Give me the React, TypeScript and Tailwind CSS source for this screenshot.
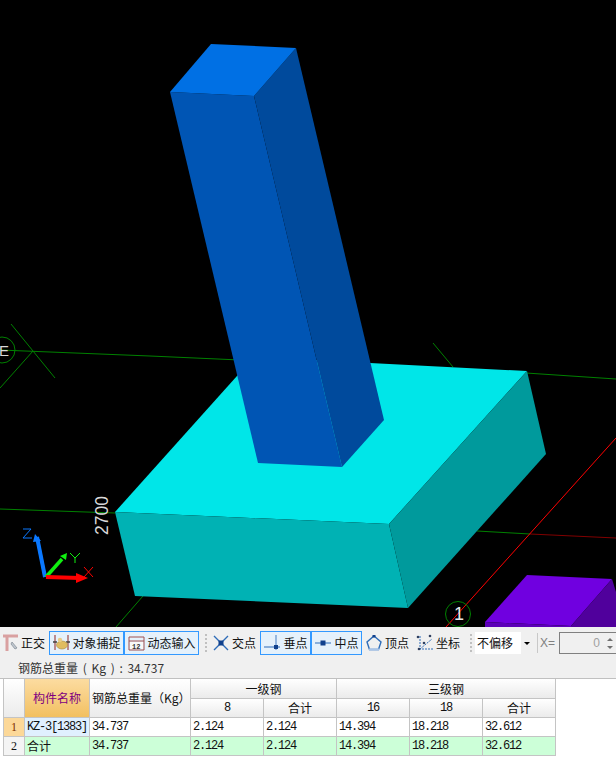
const cjk = "font-['Noto_Sans_CJK_SC','Liberation_Sans',sans-serif]";
const mono = "font-['Liberation_Mono','Noto_Sans_CJK_SC',monospace] text-[12px] tracking-[-1.2px]";

function Scene() {
  return (
    <svg width="616" height="627" viewBox="0 0 616 627" className="block">
      <g fill="none" strokeWidth="1">
        <path d="M0 350 L150 356 L240 360" stroke="#008000" />
        <path d="M526 373 L616 379" stroke="#008000" />
        <path d="M11 324 L55 378 M0 388 L33 351" stroke="#008000" />
        <path d="M0 509 L115 513" stroke="#008000" />
        <path d="M143 596 L116 627" stroke="#008000" />
        <path d="M433 343 L453 367" stroke="#008000" />
        <path d="M477 531 L530 534" stroke="#008000" />
        <path d="M530 534 L616 538" stroke="#800000" />
        <path d="M616 438 L446 627" stroke="#ff0000" />
        <circle cx="458" cy="614" r="12.5" stroke="#008000" />
        <circle cx="2" cy="350" r="13" stroke="#008000" />
      </g>
      <polygon points="115,512 254,357 527,371 389,524" fill="#00e6e8" />
      <polygon points="115,512 389,524 408,608 135,596" fill="#00b2b4" />
      <polygon points="389,524 527,371 546,454 408,608" fill="#009a9c" />
      <polygon points="170,92 254,96 342,467 258,463" fill="#0055b4" />
      <polygon points="254,96 296,48 384,420 342,467" fill="#004a9c" />
      <polygon points="170,92 211,44 296,48 254,96" fill="#0070e4" />
      <polygon points="527,575 612,579 571,626 485,622" fill="#7000e0" />
      <polygon points="612,579 616,592 616,627 571,627 571,626" fill="#50009c" />
      <polygon points="485,622 571,626 571,627 485,627" fill="#5c00b8" />
      <path d="M45 577 L37 537" stroke="#0a78ff" strokeWidth="4" fill="none" />
      <polygon points="33,542 41,541 35,534" fill="#0a78ff" />
      <path d="M46 577 L62 559" stroke="#10f010" strokeWidth="3.5" fill="none" />
      <polygon points="60,556 67,553 66,560" fill="#10f010" />
      <path d="M46 577 L80 578" stroke="#ff0000" strokeWidth="4" fill="none" />
      <polygon points="76,573 88,578 76,583" fill="#ff0000" />
      <path d="M23 529 H31 L23 538 H32" stroke="#0a78ff" fill="none" />
      <path d="M70 553 L75 558 L80 553 M75 558 V563" stroke="#10f010" fill="none" />
      <path d="M84 567 L93 577 M93 567 L84 577" stroke="#ff0000" fill="none" />
      <text x="-1" y="356" fontFamily="Liberation Sans, sans-serif" fontSize="15" fill="#d8d8d8">E</text>
      <text x="459" y="620" fontFamily="Liberation Sans, sans-serif" fontSize="18" textAnchor="middle" fill="#e8e8e8">1</text>
      <text transform="translate(108 535) rotate(-90)" fontFamily="Liberation Sans, sans-serif" fontSize="17.5" fill="#d8d8d8">2700</text>
    </svg>
  );
}

function Tool({ w, active, icon, label, gap = 'gap-[2px]' }: { w: string; active?: boolean; icon: React.ReactNode; label: string; gap?: string }) {
  return (
    <div className={`${w} h-[24px] flex items-center justify-center ${gap} shrink-0 border ${active ? 'border-[#3399ff] bg-[#e5f1fb]' : 'border-transparent'}`}>
      {icon}
      <span className="text-[12px] leading-none text-[#111] whitespace-nowrap">{label}</span>
    </div>
  );
}

function Handle({ className }: { className: string }) {
  return (
    <div className={`flex flex-col gap-[2px] shrink-0 ${className}`}>
      {[0, 1, 2, 3, 4].map((i) => (
        <div key={i} className="w-[2px] h-[2px] bg-[#c0c0c0]" />
      ))}
    </div>
  );
}

const Ic = ({ children, w = 18 }: { children: React.ReactNode; w?: number }) => (
  <svg width={w} height="18" viewBox={`0 0 ${w} 18`} className="shrink-0">{children}</svg>
);

function Toolbar() {
  return (
    <div className={`h-[30px] flex items-center bg-[#f0f0f0] pt-[2px] shrink-0 ${cjk}`}>
      <div className="w-[49px] h-[24px] flex items-center shrink-0 pl-[2px] gap-[1px]">
        <Ic>
          <path d="M1 2 H16 M5 2 V17" stroke="#d9a0a0" strokeWidth="3" fill="none" />
          <path d="M10 8 L15 14 L13 15 L9 10 Z" fill="#c0c8d0" stroke="#808890" strokeWidth="0.7" />
        </Ic>
        <span className="text-[12px] leading-none text-[#111]">正交</span>
      </div>
      <Tool
        w="w-[75px]"
        active
        gap="gap-0"
        label="对象捕捉"
        icon={
          <Ic w={20}>
            <path d="M3 1 V16 M16 1 V16" stroke="#a04848" strokeWidth="1.2" />
            <path d="M1 8 H5 M14 8 H18" stroke="#404040" strokeWidth="1.5" />
            <ellipse cx="10" cy="11" rx="5.5" ry="4" fill="#e0bc60" stroke="#a88840" strokeWidth="0.6" />
            <circle cx="8" cy="6" r="2.2" fill="#e8cc88" />
          </Ic>
        }
      />
      <Tool
        w="w-[75px]"
        active
        gap="gap-0"
        label="动态输入"
        icon={
          <Ic w={20}>
            <path d="M2 3 H17 M2 7 H17 M2 3 V16 H17 V3" stroke="#a05050" strokeWidth="1" fill="none" />
            <rect x="3" y="8" width="13" height="7" fill="#f8f8f8" />
            <text x="5" y="15" fontSize="7" fontFamily="Liberation Mono, monospace" fontWeight="700" fill="#333">12</text>
          </Ic>
        }
      />
      <Handle className="ml-[6px] mr-[3px]" />
      <Tool
        w="w-[48px]"
        label="交点"
        icon={
          <Ic>
            <path d="M2 2 L16 16 M16 2 L2 16" stroke="#2f6db8" strokeWidth="1.4" />
            <rect x="6.5" y="6.5" width="5" height="5" fill="#10408c" />
          </Ic>
        }
      />
      <div className="w-[2px] shrink-0" />
      <Tool
        w="w-[51px]"
        active
        label="垂点"
        icon={
          <Ic>
            <path d="M1 13 H17 M13 1 V16" stroke="#6a98d0" strokeWidth="1.3" />
            <rect x="11" y="11" width="4" height="4" fill="#10408c" />
          </Ic>
        }
      />
      <Tool
        w="w-[51px]"
        active
        label="中点"
        icon={
          <Ic>
            <path d="M1 9 H17" stroke="#6a98d0" strokeWidth="1.5" />
            <rect x="6.5" y="6.5" width="5" height="5" fill="#10408c" />
          </Ic>
        }
      />
      <Tool
        w="w-[50px]"
        label="顶点"
        icon={
          <Ic>
            <polygon points="9,2 16,8 13.5,15.5 4.5,15.5 2,8" fill="none" stroke="#2f6db8" strokeWidth="1.4" />
            <rect x="7.5" y="1" width="3" height="2.5" fill="#10408c" />
            <rect x="4" y="14.5" width="10" height="2" fill="#a8c4e8" />
          </Ic>
        }
      />
      <div className="w-[1px] shrink-0" />
      <Tool
        w="w-[50px]"
        label="坐标"
        icon={
          <Ic>
            <path d="M4 2 V15 H17 M4 15 L16 5" stroke="#2f6db8" strokeWidth="1" strokeDasharray="2 1" fill="none" />
            <circle cx="2" cy="3" r="1.3" fill="#304060" />
            <circle cx="14" cy="2" r="1.3" fill="#304060" />
            <circle cx="8" cy="9" r="1.3" fill="#304060" />
            <circle cx="3" cy="15" r="1.3" fill="#304060" />
          </Ic>
        }
      />
      <Handle className="ml-[7px] mr-[3px]" />
      <div className="w-[58px] h-[22px] bg-white flex items-center justify-between shrink-0">
        <span className="text-[12px] leading-none text-[#111] pl-[2px] whitespace-nowrap">不偏移</span>
        <div className="w-[12px] h-[22px] bg-[#f0f0f0] flex items-center justify-center">
          <div className="w-0 h-0 border-x-[3px] border-x-transparent border-t-[3px] border-t-black" />
        </div>
      </div>
      <div className="w-px h-[20px] bg-[#c8c8c8] ml-[4px] mr-[2px] shrink-0" />
      <span className="text-[12px] leading-none text-[#808080] font-['Liberation_Sans',sans-serif] w-[19px] shrink-0">X=</span>
      <div className="w-[58px] h-[22px] border border-[#808080] bg-[#f0f0f0] flex items-center justify-end shrink-0">
        <span className="text-[12px] text-[#a0a0a0] font-['Liberation_Sans',sans-serif] pr-[7px]">0</span>
        <div className="flex flex-col gap-[5px] pr-[3px]">
          <div className="w-0 h-0 border-x-[3px] border-x-transparent border-b-[3px] border-b-[#707070]" />
          <div className="w-0 h-0 border-x-[3px] border-x-transparent border-t-[3px] border-t-[#707070]" />
        </div>
      </div>
    </div>
  );
}

const head = 'bg-linear-to-b from-white to-[#ebebeb] flex items-center justify-center text-[12px] text-[#111]';
const numCls = `flex items-center pl-[2px] whitespace-nowrap text-[#111] ${mono}`;

function Row({ bg, first, firstBg, index, indexBg, indexText }: { bg: string; first: string; firstBg: string; index: string; indexBg: string; indexText: string }) {
  const firstIsCjk = first === '合计';
  return (
    <>
      <div className={`${indexBg} ${indexText} flex items-center justify-center text-[12px] font-['Liberation_Serif',serif]`}>{index}</div>
      <div className={`${firstBg} flex items-center pl-[2px] whitespace-nowrap text-[#111] ${firstIsCjk ? 'text-[12px]' : mono}`}>{first}</div>
      {['34.737', '2.124', '2.124', '14.394', '18.218', '32.612'].map((v, i) => (
        <div key={i} className={`${bg} ${numCls}`}>{v}</div>
      ))}
    </>
  );
}

function DataTable() {
  return (
    <div className="pl-[3px] bg-white">
      <div className={`w-[553px] grid grid-cols-[20px_64px_100px_72px_72px_72px_72px_72px] grid-rows-[19px_18px_18px_18px] gap-px bg-[#c4c4c4] px-px pb-px ${cjk}`}>
        <div className="row-span-2 bg-linear-to-b from-white to-[#ebebeb]" />
        <div className="row-span-2 bg-linear-to-b from-[#fcdca0] to-[#f2c060] flex items-center justify-center text-[12px] text-[#800080]">构件名称</div>
        <div className="row-span-2 bg-linear-to-b from-white to-[#ebebeb] flex items-center pl-[2px] text-[12px] text-[#111] whitespace-nowrap">钢筋总重量（Kg）</div>
        <div className={`col-span-2 ${head}`}>一级钢</div>
        <div className={`col-span-3 ${head}`}>三级钢</div>
        <div className={`${head} ${mono}`}>8</div>
        <div className={head}>合计</div>
        <div className={`${head} ${mono}`}>16</div>
        <div className={`${head} ${mono}`}>18</div>
        <div className={head}>合计</div>
        <Row index="1" indexBg="bg-[#fcd898]" indexText="text-[#803000]" first="KZ-3[1383]" firstBg="bg-[#e0f0ff]" bg="bg-white" />
        <Row index="2" indexBg="bg-[#f4f4f4]" indexText="text-[#111]" first="合计" firstBg="bg-[#ccffd8]" bg="bg-[#ccffd8]" />
      </div>
    </div>
  );
}

export default function App() {
  return (
    <div className="w-[616px] h-[761px] overflow-hidden bg-white flex flex-col">
      <div className="h-[627px] bg-black shrink-0">
        <Scene />
      </div>
      <Toolbar />
      <div className={`h-[22px] shrink-0 bg-[#f0f0f0] border-b border-[#c0c0c0] flex items-center pl-[18px] text-[12px] text-[#333] [word-spacing:2px] ${cjk}`}>
        钢筋总重量 ( Kg ) : 34.737
      </div>
      <DataTable />
    </div>
  );
}
